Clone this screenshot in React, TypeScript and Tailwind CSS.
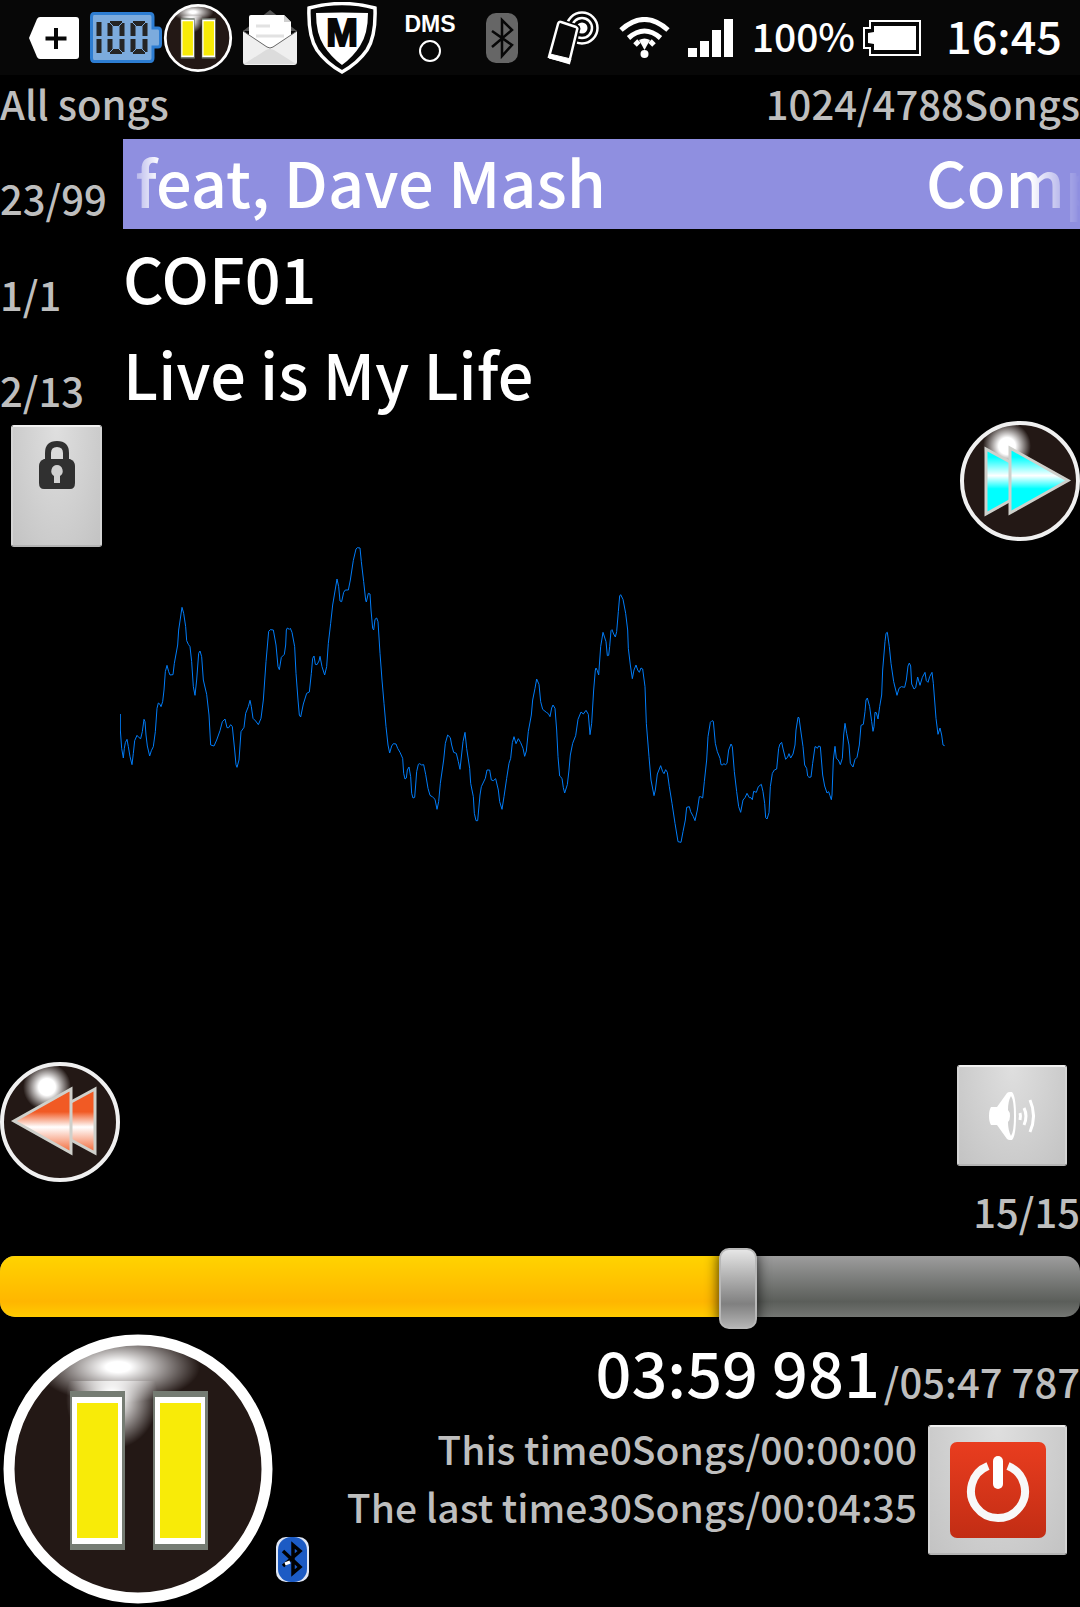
import React, { useState } from "react";

const TOTAL_MS = 347787;
const START_MS = 239981;

const pad = (n: number, width: number) => String(n).padStart(width, "0");

function clock(ms: number) {
  const seconds = Math.floor(ms / 1000);
  return `${pad(Math.floor(seconds / 60), 2)}:${pad(seconds % 60, 2)} ${pad(ms % 1000, 3)}`;
}

function PauseArt({ id, className }: { id: string; className: string }) {
  return (
    <svg viewBox="0 0 276 276" className={className} aria-hidden="true">
      <defs>
        <radialGradient id={`${id}-gloss`}>
          <stop offset="0" stopColor="#fff" />
          <stop offset="0.15" stopColor="#fff" />
          <stop offset="1" stopColor="#fff" stopOpacity="0" />
        </radialGradient>
        <clipPath id={`${id}-lower`}>
          <rect x="40" y="50" width="140" height="84" />
        </clipPath>
        <clipPath id={`${id}-disc`}>
          <circle cx="138" cy="138" r="126" />
        </clipPath>
      </defs>
      <circle cx="138" cy="138" r="130" fill="#231815" />
      <g clipPath={`url(#${id}-disc)`}>
        <ellipse cx="118" cy="36" rx="82" ry="36" fill={`url(#${id}-gloss)`} />
        <ellipse cx="112" cy="68" rx="46" ry="50" fill={`url(#${id}-gloss)`} clipPath={`url(#${id}-lower)`} />
      </g>
      <circle cx="138" cy="138" r="129" fill="none" stroke="#fff" strokeWidth="11" />
      {[70, 153].map((x) => (
        <g key={x}>
          <rect x={x} y="60" width="55" height="159" fill="#757c73" />
          <rect x={x + 2} y="66" width="50" height="147" fill="#fff" />
          <rect x={x + 7} y="72" width="41" height="135" fill="#f8eb08" />
        </g>
      ))}
    </svg>
  );
}

function SkipArt({ forward }: { forward: boolean }) {
  const id = forward ? "next" : "prev";
  const main = forward ? "#00ffff" : "#f15a24";
  return (
    <svg viewBox="0 0 120 120" className="size-[120px]" aria-hidden="true">
      <defs>
        <linearGradient id={`${id}-fill`} x1="0" y1="25" x2="0" y2="94" gradientUnits="userSpaceOnUse">
          <stop offset={forward ? "0.16" : "0.36"} stopColor={main} />
          <stop offset={forward ? "0.43" : "0.58"} stopColor="#fff" />
          <stop offset={forward ? "0.62" : "0.98"} stopColor={main} />
        </linearGradient>
        <radialGradient id={`${id}-gloss`}>
          <stop offset="0" stopColor="#fff" />
          <stop offset="0.35" stopColor="#fff" />
          <stop offset="1" stopColor="#fff" stopOpacity="0" />
        </radialGradient>
      </defs>
      <circle cx="60" cy="60" r="57" fill="#231815" />
      <circle cx="47" cy="25" r="24" fill={`url(#${id}-gloss)`} />
      <circle cx="60" cy="60" r="58" fill="none" stroke="#f0f0f0" strokeWidth="4" />
      <g fill={`url(#${id}-fill)`} stroke="#cfd0cb" strokeWidth="3">
        {forward ? (
          <>
            <path d="M26 28 L85 60 L26 93 Z" />
            <path d="M50 27 L108 59.500 L50 92 Z" />
          </>
        ) : (
          <>
            <path d="M95 27 L36 59 L95 91 Z" />
            <path d="M71 27 L14 59 L71 91 Z" />
          </>
        )}
      </g>
    </svg>
  );
}

function StatusBar() {
  return (
    <header className="flex h-[75px] shrink-0 items-center bg-[#070707] pl-[29px] pr-[18px] text-white">
      <svg viewBox="0 0 50 42" className="h-[42px] w-[50px]" aria-hidden="true">
        <path d="M11 0 H47 Q50 0 50 3 V39 Q50 42 47 42 H11 Q9 42 8 40 L0 21 L8 2 Q9 0 11 0 Z" fill="#fff" />
        <path d="M27 11 V32 M16.500 21.500 H37.500" stroke="#070707" strokeWidth="4" />
      </svg>
      <svg viewBox="0 0 72 51" className="ml-[11px] h-[51px] w-[72px]" role="img" aria-label="Battery 100">
        <path
          d="M4 1.500 H60 Q63 1.500 63 5 V16 H68 Q70.500 16 70.500 19 V32 Q70.500 35 68 35 H63 V46 Q63 49.500 60 49.500 H4 Q1.500 49.500 1.500 46 V5 Q1.500 1.500 4 1.500 Z"
          fill="#7cabdd"
          stroke="#2d7dd2"
          strokeWidth="3"
        />
        <g stroke="#252525" strokeWidth="5">
          <path d="M9 10 V24 M9 27 V41" />
          <path d="M20 11 V24 M20 27 V40 M32 11 V24 M32 27 V40 M20 11.500 H32 M20 39.500 H32" />
          <path d="M43 11 V24 M43 27 V40 M55 11 V24 M55 27 V40 M43 11.500 H55 M43 39.500 H55" />
        </g>
        <g stroke="#7cabdd" strokeWidth="1">
          <path d="M17 8 L24 15 M35 8 L28 15 M17 43 L24 36 M35 43 L28 36" />
          <path d="M40 8 L47 15 M58 8 L51 15 M40 43 L47 36 M58 43 L51 36" />
        </g>
      </svg>
      <PauseArt id="status" className="ml-px size-[70px]" />
      <svg viewBox="0 0 56 56" className="ml-[9px] size-[56px]" aria-hidden="true">
        <path d="M1 21 L28 0 L55 21 Z" fill="#555" />
        <path d="M7 7 Q7 5 9 5 H42 L49 12 V32 L28 46 L7 32 Z" fill="#fff" />
        <path d="M42 5 V12 H49 Z" fill="#cfcfcf" />
        <path d="M14 16 H28 M14 26 H42" stroke="#e2e2e2" strokeWidth="3" />
        <path d="M1 21 L25 37 Q28 39 31 37 L55 21 V52 Q55 55 52 55 H4 Q1 55 1 52 Z" fill="#efefef" />
        <path d="M1 21 L25 37 Q28 39 31 37 L55 21" fill="none" stroke="#666" strokeWidth="1" />
        <path d="M2 54 L24 40 Q28 38 32 40 L54 54 Z" fill="#dcdcdc" />
      </svg>
      <svg viewBox="0 0 70 72" className="ml-[9px] h-[72px] w-[70px]" aria-hidden="true">
        <path
          d="M2 6 Q35 -3 68 6 Q69 34 60 48 Q51 61 35 70 Q19 61 10 48 Q1 34 2 6 Z"
          fill="#070707"
          stroke="#fff"
          strokeWidth="3.500"
        />
        <path d="M9 11 Q35 10 61 11 Q61 32 53 44 Q46 55 35 63 Q24 55 17 44 Q9 32 9 11 Z" fill="#fff" />
        <text
          x="35"
          y="44"
          textAnchor="middle"
          fill="#070707"
          stroke="#070707"
          strokeWidth="2"
          className="font-['Liberation_Sans'] text-[38px] font-bold"
        >
          M
        </text>
      </svg>
      <div className="ml-[28px] flex w-[50px] flex-col items-center gap-[4px]">
        <span className="font-['Liberation_Sans',sans-serif] text-[23px] font-bold leading-[23px]">DMS</span>
        <span className="size-[22px] rounded-full border-2 border-white" />
      </div>
      <svg viewBox="0 0 32 50" className="ml-[31px] h-[50px] w-[32px]" aria-hidden="true">
        <rect width="32" height="50" rx="10" fill="#666" />
        <path d="M6 18 L26 32 L16 43 V7 L26 17 L6 34" fill="none" stroke="#070707" strokeWidth="2.500" />
      </svg>
      <svg viewBox="0 0 52 54" className="ml-[29px] h-[54px] w-[52px]" aria-hidden="true">
        <g fill="none" stroke="#fff" strokeWidth="2.500">
          <circle cx="35" cy="17" r="15.500" />
          <circle cx="35" cy="17" r="10" />
        </g>
        <circle cx="35" cy="17" r="5.500" fill="#fff" />
        <path
          d="M14 11 L29 16 Q31 17 30 19 L22 52 L2 46 L11 13 Q12 10 14 11 Z"
          fill="#070707"
          stroke="#070707"
          strokeWidth="6"
        />
        <path d="M14 11 L29 16 Q31 17 30 19 L22 52 L2 46 L11 13 Q12 10 14 11 Z" fill="#070707" stroke="#fff" strokeWidth="2.500" />
        <path d="M3 43 L24 48 L22 52 L2 47 Z" fill="#fff" stroke="#fff" />
      </svg>
      <svg viewBox="0 0 51 42" className="ml-[20px] h-[42px] w-[51px]" aria-hidden="true">
        <g fill="none" stroke="#fff" strokeWidth="5">
          <path d="M2 13 Q25.500 -8 49 13" />
          <path d="M9.500 21 Q25.500 7 41.500 21" />
          <path d="M16 28 L20 24 M35 28 L31 24" />
        </g>
        <path d="M20 23 Q25.500 20 31 23 L25.500 33 Z" fill="#fff" />
        <circle cx="25.500" cy="37" r="4" fill="#fff" />
      </svg>
      <svg viewBox="0 0 45 38" className="ml-[18px] h-[38px] w-[45px]" fill="#fff" aria-hidden="true">
        <rect x="0" y="29" width="9" height="9" />
        <rect x="12" y="22" width="9" height="16" />
        <rect x="24" y="11" width="9" height="27" />
        <rect x="36" y="0" width="9" height="38" />
      </svg>
      <span className="ml-auto pb-[6px] text-[39px] font-medium leading-[60px]">100%</span>
      <svg viewBox="0 0 58 36" className="ml-[8px] h-[36px] w-[58px]" aria-hidden="true">
        <path d="M7 1 H57 V35 H7 V28 H1 V8 H7 Z" fill="none" stroke="#fff" strokeWidth="2" />
        <path d="M11 6 H53 V30 H11 V24 L5 23 V13 L11 12 Z" fill="#fff" />
      </svg>
      <time className="ml-[25px] pb-[6px] text-[45px] font-medium leading-[60px]">16:45</time>
    </header>
  );
}

function TrackRow({ position, children }: { position: string; children: React.ReactNode }) {
  return (
    <li className="flex h-[90px]">
      <span className="w-[123px] shrink-0 pt-[29px] text-[40px] leading-[60px] text-[#bebebe]">{position}</span>
      {children}
    </li>
  );
}

const keyClass =
  "flex justify-center rounded-[3px] border-2 border-t-[#f0f0f0] border-x-[#d4d4d4] border-b-[#b4b4b4] bg-radial-[at_50%_0%] from-[#dfdfdf] to-[#c3c3c3]";

const TRACE = [
  {
    shift: 0,
    points:
      "31,552 31,600 35,655 40,684 43,655 46,638 51,628 55,650 60,680 66,704 70,670 74,632 81,616 86,622 92,626 97,605 102,568 105,575 108,615 112,648 119,678 124,662 130,650 136,605 141,535 145,519 150,523 153,530 158,515 162,480 166,425 171,406 176,425 180,435 189,434 193,400 203,345 206,300 216,232 221,250 227,290 230,332 235,343 240,350 245,395 250,470 255,496 260,450 266,370 270,363 275,380 280,450 290,493 297,555 302,645 312,648 320,630 330,602 337,575 345,567 351,593 356,593 362,584 367,590 374,660 378,704 381,712 387,690 393,605 402,592 407,550 415,530 420,511 424,530 429,565 437,573 445,584 453,565 460,510 468,395 476,304 481,299 490,300 498,345 504,410 508,419 514,382 523,373 527,345 529,300 532,294 538,298 541,295 546,307 554,350 558,430 564,510 568,555 572,561 580,522 590,490 598,486 604,430 608,385 612,378 616,403 621,404 627,393 630,379 636,410 644,435 650,410 655,340 662,280 668,225 681,147 686,170 690,213 695,215 701,187 706,180 715,180 721,150 730,91 738,57 742,53 750,54 754,95 761,155 767,210 769,216 775,190 780,192 783,240 788,295 791,300 795,268 800,264 804,275 810,370 816,450 822,520 828,590 834,645 839,669 845,648 850,641 858,642 863,655 870,667",
  },
  {
    shift: 840,
    points:
      "30,667 38,685 41,730 45,747 49,744 52,720 57,711 62,740 65,790 69,804 74,802 77,765 80,725 85,703 89,701 95,705 101,704 107,733 114,775 120,796 128,801 135,808 141,838 146,815 151,760 161,690 166,640 173,615 181,623 185,645 191,667 199,670 205,695 210,718 213,690 219,635 225,607 230,655 239,715 242,760 250,800 253,850 258,872 263,872 270,795 274,770 286,745 291,720 299,720 304,750 310,752 317,746 325,780 329,815 336,838 342,800 350,745 357,700 362,685 367,638 372,620 378,641 385,626 392,638 399,655 404,679 409,663 415,604 424,555 428,510 435,475 440,447 447,463 452,515 458,538 469,547 475,551 480,560 485,534 489,525 495,535 500,600 504,680 509,738 516,745 520,773 524,789 532,764 537,720 541,675 548,640 557,617 564,568 573,546 580,552 588,541 595,553 600,614 605,580 611,480 616,420 618,414 622,422 626,435 632,350 639,307 648,335 652,377 656,376 659,350 663,302 666,299 671,312 676,321 680,305 685,245 689,198 692,194 699,208 707,250 713,300 715,355 721,405 727,446 732,420 738,405 743,420 748,427 753,414 758,417 765,470 769,580 777,680 783,750 792,797 796,780 802,732 812,707 818,725 822,731 827,719 832,727 838,770 846,820 855,880 864,935",
  },
  {
    shift: 1680,
    points:
      "24,935 33,937 39,905 46,870 50,832 58,830 62,845 70,860 75,872 82,840 88,800 92,800 98,804 103,755 110,690 114,620 121,577 126,572 130,574 136,640 142,665 150,685 153,704 158,705 161,701 167,704 171,700 176,660 183,642 187,650 193,725 200,785 206,830 212,847 219,810 225,803 231,790 238,803 243,803 247,809 251,784 259,787 265,770 274,763 279,785 284,820 287,863 291,867 297,848 301,770 307,730 313,720 320,717 326,655 330,642 335,637 340,660 347,688 353,681 357,671 362,684 369,672 375,645 378,600 384,562 387,563 392,600 399,650 404,705 410,715 413,738 417,742 423,741 428,700 435,650 439,651 442,655 446,648 451,650 458,735 464,768 471,789 476,785 480,797 484,809 486,795 490,690 495,649 499,685 505,690 511,704 517,685 521,615 525,580 530,610 537,645 541,700 549,711 555,688 561,682 568,645 573,586 580,583 585,545 588,510 592,504 599,530 605,575 609,604 612,590 615,547 619,548 624,567 629,530 635,495 638,420 645,335 648,310 652,307 658,350 663,400 671,455 681,496 687,475 694,470 704,472 709,450 714,408 718,399 722,408 725,462 732,477 737,473 743,441 750,466 757,442 765,427 769,452 774,457 779,440 786,427 790,460 798,565 804,613 810,594 815,615 819,645 824,647",
  },
];

export default function App() {
  const [position, setPosition] = useState(START_MS);
  const fraction = position / TOTAL_MS;

  return (
    <div className="flex min-h-screen flex-col bg-black font-['Noto_Sans_CJK_JP',sans-serif] font-medium text-white">
      <StatusBar />

      <div className="flex h-[64px] shrink-0 justify-between text-[40px] leading-[56px] text-[#bebebe]">
        <h1>All songs</h1>
        <span>1024/4788Songs</span>
      </div>

      <ul className="flex shrink-0 flex-col gap-[6px]">
        <TrackRow position="23/99">
          <div className="min-w-0 flex-1 bg-[#8f8fe0]">
            <div className="flex h-full justify-between overflow-x-clip whitespace-nowrap pl-[12px] text-[63px] leading-[84px] mask-[linear-gradient(to_right,transparent,black_36px,black_calc(100%-50px),transparent)]">
              <span>feat, Dave Mash</span>
              <span className="w-[154px] shrink-0">Comp</span>
            </div>
          </div>
        </TrackRow>
        <TrackRow position="1/1">
          <span className="text-[63px] leading-[84px]">COF01</span>
        </TrackRow>
        <TrackRow position="2/13">
          <span className="text-[63px] leading-[84px]">Live is My Life</span>
        </TrackRow>
      </ul>

      <main className="flex flex-1">
        <div className="flex w-[120px] shrink-0 flex-col justify-between">
          <button type="button" aria-label="Lock" className={`${keyClass} ml-[11px] mt-[4px] h-[122px] w-[91px] pt-[14px]`}>
            <svg viewBox="0 0 36 48" className="h-[48px] w-[36px]" aria-hidden="true">
              <path d="M9 20 V12 Q9 3 18 3 Q27 3 27 12 V20" fill="none" stroke="#303030" strokeWidth="6" />
              <path d="M5 18 H31 Q36 20 36 25 V42 Q36 48 31 48 H5 Q0 48 0 42 V25 Q0 20 5 18 Z" fill="#303030" />
              <path d="M18 24 a6 6 0 0 1 3 11 V42 H15 V35 a6 6 0 0 1 3 -11 Z" fill="#d0d0d0" />
            </svg>
          </button>
          <button type="button" aria-label="Previous track">
            <SkipArt forward={false} />
          </button>
        </div>
        <div className="relative min-w-0 flex-1">
          <svg
            viewBox="30 -327 2520 2283"
            preserveAspectRatio="none"
            className="absolute inset-0 size-full"
            role="img"
            aria-label="Audio spectrum"
          >
            {TRACE.map((part) => (
              <polyline
                key={part.shift}
                points={part.points}
                transform={`translate(${part.shift} 0)`}
                fill="none"
                stroke="#007cf8"
                strokeWidth="1"
                vectorEffect="non-scaling-stroke"
              />
            ))}
          </svg>
        </div>
        <div className="flex w-[120px] shrink-0 flex-col items-end justify-between">
          <button type="button" aria-label="Next track">
            <SkipArt forward />
          </button>
          <button type="button" aria-label="Volume" className={`${keyClass} mb-[16px] mr-[13px] h-[101px] w-[110px] items-center`}>
            <svg viewBox="0 0 46 48" className="h-[48px] w-[46px]" aria-hidden="true">
              <path d="M2 15 H8 L18 1 Q19 0 21 0 H23 Q27 4 27 24 Q27 44 23 48 H21 Q19 48 18 47 L8 33 H2 Q0 30 0 24 Q0 18 2 15 Z" fill="#fff" />
              <path d="M22 4 Q25 8 25 24 Q25 40 22 44 Q19 38 19 30 Q21 28 21 24 Q21 20 19 18 Q19 9 22 4 Z" fill="#cfcfcf" />
              <g fill="none" stroke="#fff" strokeWidth="3">
                <path d="M31 21 Q32 24 31 28" />
                <path d="M35 16 Q39 24 35 33" />
                <path d="M41 8 Q48 24 41 40" />
              </g>
            </svg>
          </button>
        </div>
      </main>

      <p className="h-[66px] shrink-0 text-right text-[40px] leading-[58px] text-[#bebebe]">15/15</p>

      <div className="relative h-[81px] shrink-0 pt-[8px]">
        <div className="h-[61px] w-full overflow-hidden rounded-[15px] bg-linear-to-b from-[#9d9d9d] via-[#5b5e5a] via-75% to-[#747673]">
          <div
            className="h-full bg-linear-to-b from-[#ffd300] via-[#ffb600] via-75% to-[#ffcb00]"
            style={{ width: `${fraction * 100}%` }}
          />
        </div>
        <input
          type="range"
          aria-label="Playback position"
          min={0}
          max={TOTAL_MS}
          value={position}
          onChange={(event) => setPosition(Number(event.target.value))}
          className="absolute inset-0 size-full appearance-none bg-transparent [&::-webkit-slider-thumb]:h-[81px] [&::-webkit-slider-thumb]:w-[38px] [&::-webkit-slider-thumb]:appearance-none [&::-webkit-slider-thumb]:rounded-[10px] [&::-webkit-slider-thumb]:border-2 [&::-webkit-slider-thumb]:border-[#b8b8b8] [&::-webkit-slider-thumb]:bg-linear-to-b [&::-webkit-slider-thumb]:from-[#e6e6e6] [&::-webkit-slider-thumb]:via-[#808080] [&::-webkit-slider-thumb]:via-70% [&::-webkit-slider-thumb]:to-[#b4b4b4] [&::-webkit-slider-thumb]:shadow-[0_0_14px_rgba(0,0,0,0.8)]"
        />
      </div>

      <footer className="flex h-[278px] shrink-0">
        <button type="button" aria-label="Pause" className="shrink-0 self-end">
          <PauseArt id="large" className="size-[276px]" />
        </button>
        <svg viewBox="0 0 33 45" className="mb-[25px] h-[45px] w-[33px] shrink-0 self-end" role="img" aria-label="Bluetooth">
          <rect width="33" height="45" rx="10" fill="#dfe6f4" />
          <rect x="2" y="0" width="29" height="45" rx="13" fill="#1c5bc4" />
          <path d="M7 14 L24 30 L17 36 V8 L24 14 L7 29" fill="none" stroke="#000" strokeWidth="3.500" />
          <path d="M9 27 L14 25" stroke="#fff" strokeWidth="3" />
        </svg>
        <div className="flex min-w-0 flex-1 flex-col">
          <p className="flex h-[90px] items-baseline justify-end whitespace-nowrap text-[#bebebe]">
            <span className="text-[63px] leading-[84px] text-white">{clock(position)}</span>
            <span className="ml-[4px] text-[40px] leading-[60px]">/{clock(TOTAL_MS)}</span>
          </p>
          <div className="flex justify-end gap-[11px] pr-[13px]">
            <div className="text-right text-[39px] leading-[58px] text-[#bebebe]">
              <p>This time0Songs/00:00:00</p>
              <p>The last time30Songs/00:04:35</p>
            </div>
            <button type="button" aria-label="Power off" className={`${keyClass} mt-[6px] h-[130px] w-[139px] shrink-0 items-center`}>
              <svg viewBox="0 0 96 96" className="size-[96px]" aria-hidden="true">
                <defs>
                  <linearGradient id="power" x1="0" y1="0" x2="0" y2="1">
                    <stop offset="0" stopColor="#e93d1f" />
                    <stop offset="1" stopColor="#c22d14" />
                  </linearGradient>
                </defs>
                <rect width="96" height="96" rx="7" fill="url(#power)" />
                <path d="M38 24 A27 27 0 1 0 58 24" fill="none" stroke="#f8f8f8" strokeWidth="8" />
                <path d="M48 19 V42" stroke="#fff" strokeWidth="10" strokeLinecap="round" />
              </svg>
            </button>
          </div>
        </div>
      </footer>
    </div>
  );
}
